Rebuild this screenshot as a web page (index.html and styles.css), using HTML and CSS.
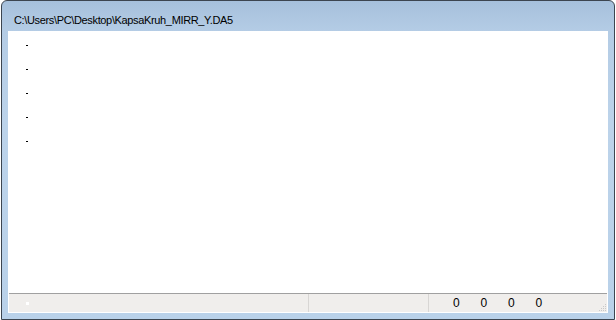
FILE: index.html
```html
<!DOCTYPE html>
<html>
<head>
<meta charset="utf-8">
<link rel="stylesheet" href="styles.css">
</head>
<body>
<div class="window">
  <div class="titlebar">C:\Users\PC\Desktop\KapsaKruh_MIRR_Y.DA5</div>
  <div class="client">
    <div class="content">
      <div class="dot"></div>
      <div class="dot"></div>
      <div class="dot"></div>
      <div class="dot"></div>
      <div class="dot"></div>
    </div>
    <div class="statusbar">
      <div class="panel panel-main"><span class="marker"></span></div>
      <div class="panel panel-mid"></div>
      <div class="panel panel-nums">
        <span class="num">0</span>
        <span class="num">0</span>
        <span class="num">0</span>
        <span class="num">0</span>
      </div>
      <div class="grip">
        <svg width="10" height="10" viewBox="0 0 10 10">
          <rect x="8" y="2" width="1" height="1" fill="#c8c8c8"/>
          <rect x="6" y="4" width="1" height="1" fill="#c8c8c8"/>
          <rect x="8" y="4" width="1" height="1" fill="#c8c8c8"/>
          <rect x="4" y="6" width="1" height="1" fill="#c8c8c8"/>
          <rect x="6" y="6" width="1" height="1" fill="#c8c8c8"/>
          <rect x="8" y="6" width="1" height="1" fill="#c8c8c8"/>
          <rect x="2" y="8" width="1" height="1" fill="#c8c8c8"/>
          <rect x="4" y="8" width="1" height="1" fill="#c8c8c8"/>
          <rect x="6" y="8" width="1" height="1" fill="#c8c8c8"/>
          <rect x="8" y="8" width="1" height="1" fill="#c8c8c8"/>
        </svg>
      </div>
    </div>
  </div>
</div>
</body>
</html>
```
FILE: styles.css
```css
html, body {
  margin: 0;
  padding: 0;
  width: 616px;
  height: 320px;
  background: #ffffff;
  overflow: hidden;
}

.window {
  box-sizing: border-box;
  width: 614px;
  height: 320px;
  margin-left: 1px;
  border: 1px solid #3c4550;
  border-radius: 6px 6px 0 0;
  background: linear-gradient(to bottom, #a6c0dc 0px, #b4cce5 30px, #bcd3ea 120px, #b9d1e9 320px);
  display: flex;
  flex-direction: column;
  padding: 0 6px 6px 6px;
  font-family: "Liberation Sans", Arial, sans-serif;
}

.titlebar {
  height: 30px;
  flex: none;
  padding-left: 6px;
  font-size: 11px;
  letter-spacing: -0.35px;
  line-height: 38px;
  color: #000000;
  white-space: nowrap;
  overflow: hidden;
}

.client {
  flex: 1;
  display: flex;
  flex-direction: column;
  background: #ffffff;
  border: 1px solid #ffffff;
  border-top: none;
}

.content {
  flex: 1;
  display: flex;
  flex-direction: column;
  gap: 23px;
  padding: 14px 0 0 17px;
}

.dot {
  width: 2px;
  height: 1px;
  background: #000000;
}

.statusbar {
  height: 18px;
  flex: none;
  border-top: 1px solid #a0a0a0;
  background: #f0eeec;
  display: flex;
  align-items: stretch;
  font-size: 12px;
}

.panel {
  box-sizing: border-box;
  display: flex;
  align-items: center;
}

.panel-main {
  width: 300px;
  border-right: 1px solid #d8d6d4;
  padding-left: 17px;
}

.marker {
  width: 3px;
  height: 3px;
  background: #ffffff;
}

.panel-mid {
  width: 120px;
  border-right: 1px solid #d8d6d4;
}

.panel-nums {
  flex: 1;
  padding-left: 24px;
  gap: 20px;
}

.num {
  display: inline-block;
  width: 7.5px;
}

.grip {
  width: 10px;
  display: flex;
  align-items: flex-end;
}
```
